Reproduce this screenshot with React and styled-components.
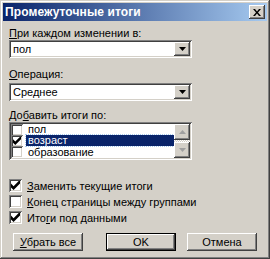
import React from "react";
import styled, { createGlobalStyle } from "styled-components";

const GlobalStyle = createGlobalStyle`
  body {
    margin: 0;
    background: #d4d0c8;
    font-family: "Liberation Sans", Arial, sans-serif;
    font-size: 11px;
  }
`;

// классическая рамка окна
const Window = styled.div`
  width: 270px;
  height: 259px;
  box-sizing: border-box;
  padding: 3px;
  background: #d4d0c8;
  box-shadow: inset -1px -1px #404040, inset 1px 1px #d4d0c8,
    inset -2px -2px #808080, inset 2px 2px #ffffff;
  display: flex;
  flex-direction: column;
`;

const TitleBar = styled.div`
  height: 18px;
  display: flex;
  align-items: center;
  justify-content: space-between;
  padding: 0 2px 0 2px;
  background: linear-gradient(to right, #0a246a, #a6caf0);
`;

const TitleText = styled.span`
  color: #fff;
  font-weight: bold;
  font-size: 12px;
  letter-spacing: 0.1px;
`;

const Raised = styled.div`
  background: #d4d0c8;
  box-shadow: inset -1px -1px #404040, inset 1px 1px #ffffff,
    inset -2px -2px #808080, inset 2px 2px #d4d0c8;
  display: flex;
  align-items: center;
  justify-content: center;
  box-sizing: border-box;
`;

const CloseBtn = styled(Raised)`
  width: 16px;
  height: 14px;
`;

const Body = styled.div`
  padding: 6px 0 0 6px;
  display: flex;
  flex-direction: column;
`;

const Label = styled.div`
  line-height: 13px;
  height: 13px;
  margin-top: ${(p) => p.$top || 0}px;
  color: #000;
`;

const U = styled.span`
  text-decoration: underline;
`;

const Sunken = styled.div`
  background: #fff;
  box-sizing: border-box;
  box-shadow: inset 1px 1px #808080, inset -1px -1px #ffffff,
    inset 2px 2px #404040, inset -2px -2px #d4d0c8;
`;

const Combo = styled(Sunken)`
  width: 183px;
  height: 18px;
  margin-top: ${(p) => p.$top || 0}px;
  display: flex;
  align-items: center;
  padding: 2px;
`;

const ComboText = styled.div`
  flex: 1;
  padding-left: 2px;
  line-height: 14px;
`;

const DropBtn = styled(Raised)`
  width: 16px;
  height: 14px;
`;

const List = styled(Sunken)`
  width: 183px;
  height: 38px;
  padding: 2px;
  display: flex;
`;

const Items = styled.div`
  flex: 1;
  display: flex;
  flex-direction: column;
`;

const Item = styled.div`
  height: 11.33px;
  display: flex;
  align-items: center;
`;

const ItemText = styled.span`
  margin-left: 3px;
  padding: 0 2px;
  line-height: 11px;
  flex: ${(p) => (p.$sel ? 1 : "none")};
  background: ${(p) => (p.$sel ? "#0a246a" : "transparent")};
  color: ${(p) => (p.$sel ? "#fff" : "#000")};
  outline: ${(p) => (p.$sel ? "1px dotted #a6caf0" : "none")};
`;

const Box = styled.div`
  width: 13px;
  height: 13px;
  flex: none;
  box-sizing: border-box;
  background: #fff;
  box-shadow: inset 1px 1px #808080, inset -1px -1px #ffffff,
    inset 2px 2px #404040, inset -2px -2px #d4d0c8;
  display: flex;
  align-items: center;
  justify-content: center;
`;

const SmallBox = styled(Box)`
  width: 12px;
  height: 12px;
`;

const Scroll = styled.div`
  width: 16px;
  display: flex;
  flex-direction: column;
  background-color: #eae8e4;
  background-image: repeating-conic-gradient(#d4d0c8 0 25%, #ffffff 0 50%);
  background-size: 2px 2px;
`;

const ScrollBtn = styled(Raised)`
  width: 16px;
  height: 16px;
`;

const Spacer = styled.div`
  flex: 1;
`;

const Checks = styled.div`
  margin-top: 19px;
  display: flex;
  flex-direction: column;
  gap: 3px;
`;

const CheckRow = styled.div`
  display: flex;
  align-items: center;
  height: 13px;
`;

const CheckLabel = styled.span`
  margin-left: 5px;
`;

const Buttons = styled.div`
  margin-top: 9px;
  display: flex;
  gap: 0;
`;

const Button = styled(Raised)`
  width: 70px;
  height: 18px;
  margin-left: ${(p) => p.$left || 0}px;
  font-size: 11px;
  box-shadow: ${(p) =>
    p.$default
      ? "inset 0 0 0 1px #000, inset -2px -2px #404040, inset 2px 2px #ffffff, inset -3px -3px #808080"
      : "inset -1px -1px #404040, inset 1px 1px #ffffff, inset -2px -2px #808080, inset 2px 2px #d4d0c8"};
`;

const Check = ({ size = 9 }) => (
  <svg width={size} height={size} viewBox="0 0 7 7">
    <path d="M0 2v3l2 2 5-5V-1L2 4z" fill="#000" transform="translate(0,0)" />
  </svg>
);

const Arrow = ({ up, color = "#000" }) => (
  <svg width="7" height="4" viewBox="0 0 7 4">
    <path d={up ? "M3.5 0L7 4H0z" : "M0 0h7L3.5 4z"} fill={color} />
  </svg>
);

function App() {
  const fields = [
    { name: "пол", on: false },
    { name: "возраст", on: true, sel: true },
    { name: "образование", on: false },
  ];

  return (
    <>
      <GlobalStyle />
      <Window>
        <TitleBar>
          <TitleText>Промежуточные итоги</TitleText>
          <CloseBtn>
            <svg width="8" height="7" viewBox="0 0 8 7">
              <path d="M0 0h2l2 2.5L6 0h2L5 3.5 8 7H6L4 4.5 2 7H0l3-3.5z" fill="#000" />
            </svg>
          </CloseBtn>
        </TitleBar>
        <Body>
          <Label>
            <U>П</U>ри каждом изменении в:
          </Label>
          <Combo>
            <ComboText>пол</ComboText>
            <DropBtn>
              <Arrow />
            </DropBtn>
          </Combo>

          <Label $top={10}>
            <U>О</U>перация:
          </Label>
          <Combo $top={2}>
            <ComboText>Среднее</ComboText>
            <DropBtn>
              <Arrow />
            </DropBtn>
          </Combo>

          <Label $top={8}>
            До<U>б</U>авить итоги по:
          </Label>
          <List>
            <Items>
              {fields.map((f) => (
                <Item key={f.name}>
                  <SmallBox>{f.on && <Check size={8} />}</SmallBox>
                  <ItemText $sel={f.sel}>{f.name}</ItemText>
                </Item>
              ))}
            </Items>
            <Scroll>
              <ScrollBtn>
                <Arrow up color="#a0a0a0" />
              </ScrollBtn>
              <Spacer />
              <ScrollBtn>
                <Arrow color="#a0a0a0" />
              </ScrollBtn>
            </Scroll>
          </List>

          <Checks>
            <CheckRow>
              <Box>
                <Check />
              </Box>
              <CheckLabel>
                <U>З</U>аменить текущие итоги
              </CheckLabel>
            </CheckRow>
            <CheckRow>
              <Box />
              <CheckLabel>
                <U>К</U>онец страницы между группами
              </CheckLabel>
            </CheckRow>
            <CheckRow>
              <Box>
                <Check />
              </Box>
              <CheckLabel>
                Ито<U>г</U>и под данными
              </CheckLabel>
            </CheckRow>
          </Checks>

          <Buttons>
            <Button $left={4}>
              <span>
                <U>У</U>брать все
              </span>
            </Button>
            <Button $left={23} $default>
              OK
            </Button>
            <Button $left={11}>Отмена</Button>
          </Buttons>
        </Body>
      </Window>
    </>
  );
}

export default App;
